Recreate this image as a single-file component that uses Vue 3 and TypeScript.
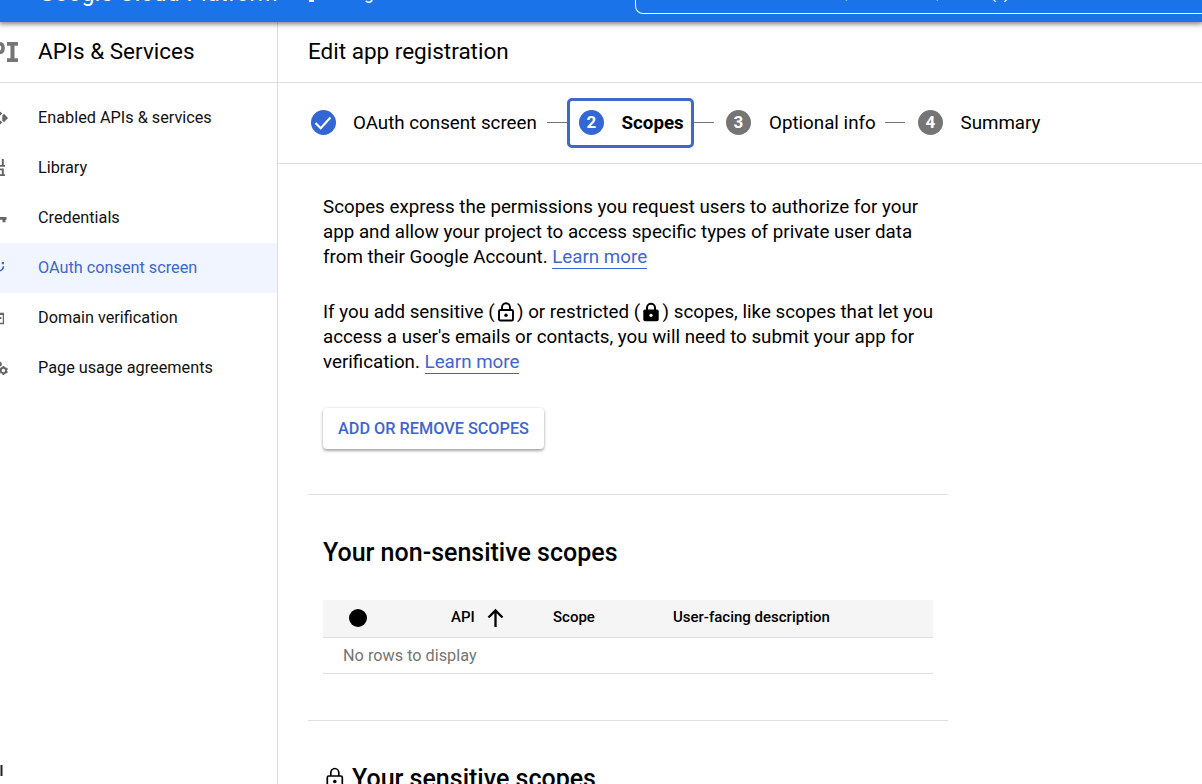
<script setup lang="ts">
interface NavItem { label: string; icon: string; active?: boolean }
interface Step { label: string; state: 'done' | 'current' | 'todo' }

const nav: NavItem[] = [
  { label: 'Enabled APIs & services', icon: 'apis' },
  { label: 'Library', icon: 'library' },
  { label: 'Credentials', icon: 'key' },
  { label: 'OAuth consent screen', icon: 'consent', active: true },
  { label: 'Domain verification', icon: 'domain' },
  { label: 'Page usage agreements', icon: 'agreements' },
]

const steps: Step[] = [
  { label: 'OAuth consent screen', state: 'done' },
  { label: 'Scopes', state: 'current' },
  { label: 'Optional info', state: 'todo' },
  { label: 'Summary', state: 'todo' },
]
</script>

<template>
  <div class="page">
    <header class="topbar">
      <span class="brand">Google Cloud Platform</span>
      <span class="project"><i class="project-dot"></i><span class="project-name">Google</span></span>
      <div class="search"><span>Search&nbsp; Products, resources, docs (/)</span></div>
    </header>

    <div class="body">
      <aside class="sidebar">
        <div class="side-head">
          <svg class="api-logo" width="20" height="24" viewBox="0 0 20 24">
            <path d="M-5 2H0Q4.800 2 4.800 8T0 14H-1V22H-5V10.500H-.5Q1.300 10.500 1.300 8T-.5 5.500H-5Z M7 2H18V5.800H14.500V18.200H18V22H7V18.200H10.500V5.800H7Z" fill="#757575" />
          </svg>
          <span class="side-title">APIs &amp; Services</span>
        </div>
        <nav>
          <a v-for="n in nav" :key="n.label" class="nav-item" :class="{ active: n.active }">
            <svg class="nav-icon" width="10" height="20" viewBox="0 0 10 20" fill="currentColor">
              <g v-if="n.icon === 'apis'">
                <path d="M4 5.800L8 10L4 14.200L2.300 12.500V7.500Z" />
                <path d="M-1 2.500L2.300 5.500L.3 7.500L-2 5Z M-1 17.500L2.300 14.500L.3 12.500L-2 15Z" />
              </g>
              <g v-else-if="n.icon === 'library'">
                <path d="M1.800 1H3.800V7H5V8.800H0V7H1.800Z M1.800 10.500H3.800V16.200H5V18H0V16.200H1.800V12.300H0V10.500Z" />
              </g>
              <path v-else-if="n.icon === 'key'" d="M0 9H6.500V11.800H5.500V14.300H2.500V11.800H0Z" />
              <g v-else-if="n.icon === 'consent'">
                <path d="M1.800 4H4V6.200H1.800Z" />
                <path d="M-1 13C1.500 12.500 3.300 11 3.500 8.200" fill="none" stroke="currentColor" stroke-width="1.600" />
              </g>
              <g v-else-if="n.icon === 'domain'">
                <path d="M-3 5.500H3.400V15.500H-3" fill="none" stroke="currentColor" stroke-width="1.300" />
                <path d="M-1 5H4V7H-1Z M0 9H1.400V11H0Z" />
              </g>
              <g v-else>
                <path d="M0 3.500L1.800 5V7.500L0 8.500Z" />
                <circle cx="3.400" cy="12.500" r="2.700" fill="none" stroke="currentColor" stroke-width="1.900" />
                <path d="M2.500 7.900H4.300V9.700H2.500Z M2.500 15.300H4.300V17.100H2.500Z M5.900 10.200L7 9.500L8 11.200L6.600 12Z M5.900 14.800L7 15.500L8 13.800L6.600 13Z M-1 11L0 9.500L1.200 10.300Z M-1 14L0 15.500L1.200 14.700Z" />
              </g>
            </svg>
            <span class="nav-label">{{ n.label }}</span>
          </a>
        </nav>
        <svg class="collapse" width="4" height="12" viewBox="0 0 4 12"><path d="M.5 0H2.500V11H.5Z" fill="#222" /></svg>
      </aside>

      <main class="main">
        <h1 class="title">Edit app registration</h1>

        <div class="stepper">
          <template v-for="(s, i) in steps" :key="s.label">
            <div v-if="i > 0" class="connector"></div>
            <div class="step" :class="[s.state, 'step-' + (i + 1)]">
              <span class="badge">
                <svg v-if="s.state === 'done'" width="25" height="25" viewBox="0 0 25 25">
                  <path d="M4.500 13L9.700 18.200L19.500 7.500" fill="none" stroke="#fff" stroke-width="2.200" />
                </svg>
                <template v-else>{{ i + 1 }}</template>
              </span>
              <span class="step-label">{{ s.label }}</span>
            </div>
          </template>
        </div>

        <div class="content">
          <section class="intro">
            <p>
              Scopes express the permissions you request users to authorize for your<br />
              app and allow your project to access specific types of private user data<br />
              from their Google Account. <a class="link">Learn more</a>
            </p>
            <p>
              If you add sensitive (<svg class="lock" width="22" height="22" viewBox="0 0 22 22">
                <path d="M7 9V6.500A4 4.200 0 0 1 15 6.500V9" fill="none" stroke="#000" stroke-width="1.900" />
                <rect x="4" y="9" width="14" height="10.500" rx="1.300" fill="none" stroke="#000" stroke-width="1.900" />
                <circle cx="11" cy="14.200" r="1.700" />
              </svg>) or restricted (<svg class="lock" width="22" height="22" viewBox="0 0 22 22">
                <path d="M7 10V6.700A4 4 0 0 1 15 6.700V10" fill="none" stroke="#000" stroke-width="2" />
                <rect x="3.300" y="8.500" width="15.400" height="11.700" rx="1.800" />
                <circle cx="11" cy="14.300" r="1.600" fill="#fff" />
              </svg>) scopes, like scopes that let you<br />
              access a user's emails or contacts, you will need to submit your app for<br />
              verification. <a class="link">Learn more</a>
            </p>
            <button class="btn">ADD OR REMOVE SCOPES</button>
          </section>

          <section class="group">
            <h2>Your non-sensitive scopes</h2>
            <div class="table">
              <div class="row head">
                <span><i class="dot"></i></span>
                <span class="api"><span class="th">API</span>
                  <svg width="18" height="20" viewBox="0 0 18 20"><path d="M8.500 19V3M1.500 9.500L8.500 2.500L15.500 9.500" fill="none" stroke="#000" stroke-width="2.300" /></svg>
                </span>
                <span class="th">Scope</span>
                <span class="th">User-facing description</span>
              </div>
              <div class="row empty">No rows to display</div>
            </div>
          </section>

          <section class="group sensitive">
            <h2>
              <svg width="24" height="26" viewBox="0 0 24 26">
                <path d="M7.800 10V6.800A4 4.300 0 0 1 15.800 6.800V10" fill="none" stroke="#000" stroke-width="1.700" />
                <rect x="4.300" y="10" width="15" height="12" rx="1.500" fill="none" stroke="#000" stroke-width="1.700" />
                <circle cx="11.800" cy="15.500" r="1.800" />
              </svg>
              <span>Your sensitive scopes</span>
            </h2>
          </section>
        </div>
      </main>
    </div>
  </div>
</template>

<style>
body { margin: 0; overflow: hidden; }
</style>

<style scoped>
.page { width: 1202px; height: 784px; overflow: hidden; background: #fff; color: #000; font-family: Roboto, sans-serif; display: flex; flex-direction: column; }
.topbar { height: 22px; flex: none; background: #1a73e8; color: #fff; display: flex; position: relative; z-index: 2; box-shadow: 0 1px 5px 1px rgba(0, 0, 0, .5); }
.brand { width: 269px; padding-left: 39px; font-size: 22.5px; letter-spacing: .55px; line-height: 24px; margin-top: -19px; height: 24px; white-space: nowrap; }
.project { width: 327px; display: flex; margin-top: -17px; height: 20px; font-size: 17.5px; line-height: 20px; }
.project-dot { width: 5px; height: 3px; background: #fff; margin: 16px 18px 0 1px; }
.search { flex: 1; margin-top: -30px; height: 44px; border: 1px solid #fff; border-right: 0; border-radius: 8px 0 0 8px; box-sizing: border-box; padding: 11px 0 0 67px; font-size: 18.75px; line-height: 20px; white-space: nowrap; }
.body { flex: 1; display: flex; min-height: 0; }
.sidebar { width: 277px; border-right: 1px solid #dadce0; flex: none; display: flex; flex-direction: column; }
.side-head { height: 60px; border-bottom: 1px solid #dadce0; display: flex; align-items: center; }
.api-logo { width: 20px; flex: none; margin-right: 18px; }
.side-title { font-size: 22.5px; line-height: 30px; margin-top: -2px; }
nav { padding-top: 10px; flex: 1; }
.nav-item { height: 50px; display: flex; align-items: center; font-size: 16.25px; color: #111; }
.nav-label { padding-bottom: 2px; }
.nav-icon { width: 10px; margin-right: 28px; color: #666; flex: none; }
.nav-item.active, .active .nav-icon { color: #3f66cf; }
.nav-item.active { background: #f0f5ff; }
.collapse { margin-bottom: 7px; flex: none; }
.main { flex: 1; min-width: 0; display: flex; flex-direction: column; }
.title { margin: 0; height: 60px; flex: none; border-bottom: 1px solid #dadce0; padding-left: 30px; font-size: 22.5px; font-weight: 400; line-height: 58px; }
.stepper { height: 80px; flex: none; border-bottom: 1px solid #e0e0e0; display: flex; align-items: center; padding-left: 33px; font-size: 18.75px; }
.step { display: flex; align-items: center; white-space: nowrap; }
.badge { width: 25px; height: 25px; border-radius: 50%; background: #757575; color: #fff; font-size: 17px; font-weight: 700; display: flex; align-items: center; justify-content: center; flex: none; margin: 0 18px 2px 0; }
.done .badge, .current .badge { background: #3367d6; }
.step-label { flex: none; }
.step-1 { width: 236px; }
.step-1 .badge { margin-right: 17px; }
.current { border: 3px solid #3f69c5; border-radius: 5px; width: 127px; height: 50px; box-sizing: border-box; padding-left: 9px; font-weight: 700; }
.current .badge { margin-right: 17.5px; }
.step-3 { width: 159px; padding-left: 12px; }
.step-4 { padding-left: 13px; }
.step-4 .badge { margin-right: 17.5px; }
.connector { width: 20px; height: 1px; background: #757575; flex: none; margin-bottom: 1px; }
.content { padding-left: 30px; width: 640px; }
.intro { height: 330px; border-bottom: 1px solid #e0e0e0; padding-left: 15px; }
p { margin: 0 0 30px; font-size: 18.75px; line-height: 25px; white-space: nowrap; }
p:first-child { padding-top: 31px; }
.link { color: #3f66cf; border-bottom: 1px solid #3367d6; }
.lock { vertical-align: -4px; height: 22px; margin: -5px .4px -5px 0; position: relative; top: -4px; }
.btn { display: block; margin-top: 33px; width: 221px; height: 41px; border: 0; border-radius: 4px; background: #fff; color: #3f66cf; font: 500 16.25px Roboto, sans-serif; padding: 0; box-shadow: 0 2px 3px rgba(0, 0, 0, .32), 0 0 3px rgba(0, 0, 0, .12); }
.group { height: 225px; border-bottom: 1px solid #e0e0e0; padding: 0 15px; }
h2 { margin: 0; padding-top: 43px; font-size: 25px; font-weight: 500; line-height: 30px; white-space: nowrap; }
.table { margin-top: 32px; }
.row { border-bottom: 1px solid #e0e0e0; display: grid; grid-template-columns: 128px 102px 120px 1fr; align-items: center; }
.head { height: 37px; background: #f5f5f5; font-size: 15px; font-weight: 500; line-height: 34px; }
.th { margin-bottom: 3px; }
.dot { display: block; width: 18px; height: 18px; border-radius: 50%; background: #000; margin: 0 0 1px 26px; }
.api { display: flex; align-items: center; gap: 12px; }
.api svg { margin-bottom: 1px; }
.empty { height: 35px; display: block; line-height: 35px; padding-left: 20px; font-size: 16.25px; color: #757575; }
.sensitive { border-bottom: 0; }
.sensitive h2 { display: flex; align-items: center; gap: 5px; }
</style>
